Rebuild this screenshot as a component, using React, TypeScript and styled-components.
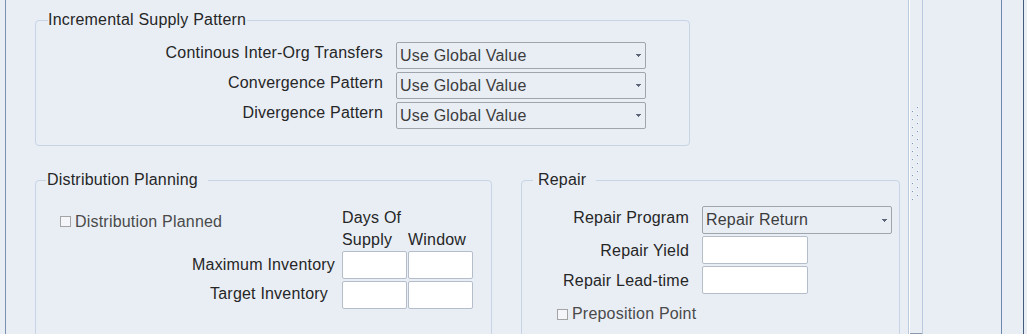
import React from 'react'
import styled, { createGlobalStyle } from 'styled-components'

const GlobalStyle = createGlobalStyle`
  html, body { margin: 0; padding: 0; background: #e9eef5; overflow: hidden; }
  body {
    font-family: "Liberation Sans", Arial, sans-serif;
    font-size: 16px;
    letter-spacing: 0.2px;
    color: #262626;
  }
`

/* ─── Frame ─────────────────────────────────────────── */

const Root = styled.div`
  display: flex;
  height: 334px;
  padding-left: 5px;
  background: #e9eef5;
`

const Main = styled.div`
  width: 903px;
  flex-shrink: 0;
  border-left: 1px solid #7b91b0;
  padding: 11px 0 0 29px;
  box-sizing: border-box;
  display: flex;
  flex-direction: column;
  gap: 25px;
`

const Splitter = styled.div`
  width: 15px;
  flex-shrink: 0;
  box-sizing: border-box;
  border-left: 1px solid #b9c9de;
  border-right: 1px solid #b9c9de;
  box-shadow: inset 1px 0 0 #ffffff;
  display: flex;
  flex-direction: column;
  align-items: flex-start;
`

const Grip = styled.svg`
  margin: 106px 0 0 3px;
  display: block;
`

const SplitterFoot = styled.div`
  margin-top: auto;
  margin-left: 1px;
  height: 1px;
  width: 12px;
  background: #8b98ae;
`

const SidePane = styled.div<{ $w: number; $line: string }>`
  width: ${p => p.$w}px;
  flex-shrink: 0;
  border-right: 1px solid ${p => p.$line};
`

/* ─── Groups ────────────────────────────────────────── */

const Group = styled.fieldset<{ $w: number }>`
  width: ${p => p.$w}px;
  box-sizing: border-box;
  margin: 0;
  padding: 0;
  min-width: 0;
  border: 1px solid #c6d4e6;
  border-radius: 4px;
`

const Legend = styled.legend<{ $ml: number; $pl: number; $pr: number }>`
  margin-left: ${p => p.$ml}px;
  padding: 0 ${p => p.$pr}px 0 ${p => p.$pl}px;
  line-height: 18px;
`

const Row = styled.div`
  display: flex;
  gap: 29px;
`

/* ─── Forms ─────────────────────────────────────────── */

const PatternGrid = styled.div`
  display: grid;
  grid-template-columns: 347px 250px;
  column-gap: 13px;
  row-gap: 3px;
  padding: 13px 43px 16px 0;
`

const DistGrid = styled.div`
  display: grid;
  grid-template-columns: 281px 65px 65px;
  grid-template-rows: 22px 20px 30px 28px;
  column-gap: 1px;
  padding: 20px 18px 40px 24px;
`

const RepairGrid = styled.div`
  display: grid;
  grid-template-columns: 132px 190px;
  grid-auto-rows: 30px;
  column-gap: 13px;
  padding: 17px 7px 40px 35px;
`

const Label = styled.div<{ $dy: number; $pr?: number }>`
  align-self: start;
  text-align: right;
  white-space: nowrap;
  line-height: 18px;
  padding-top: ${p => p.$dy}px;
  padding-right: ${p => p.$pr ?? 0}px;
`

const Head = styled.div<{ $dy: number }>`
  line-height: 18px;
  padding-top: ${p => p.$dy}px;
  white-space: nowrap;
`

const Select = styled.div<{ $h: number }>`
  height: ${p => p.$h}px;
  box-sizing: border-box;
  border: 1px solid #9fa5ad;
  border-radius: 2px;
  display: flex;
  align-items: center;
  justify-content: space-between;
  padding: 0 4px 0 3px;
  color: #3c3c3c;
  line-height: 18px;
  white-space: nowrap;
`

const TextBox = styled.div<{ $w?: number }>`
  height: 28px;
  width: ${p => (p.$w ? `${p.$w}px` : '100%')};
  box-sizing: border-box;
  background: #ffffff;
  border: 1px solid #b4bdc9;
  border-radius: 2px;
`

const Check = styled.div<{ $dy: number; $span?: number }>`
  display: flex;
  align-items: center;
  gap: 4px;
  color: #4a4a4a;
  line-height: 18px;
  white-space: nowrap;
  padding-top: ${p => p.$dy}px;
  grid-column: span ${p => p.$span ?? 1};
`

const Box = styled.span`
  width: 11px;
  height: 11px;
  box-sizing: border-box;
  border: 1px solid #a4a4a4;
  background: #f4f6fa;
  flex-shrink: 0;
`

function Arrow() {
  return (
    <svg width="5" height="3" viewBox="0 0 5 3" shapeRendering="crispEdges">
      <rect x="0" y="0" width="5" height="1" fill="#5f6678" />
      <rect x="1" y="1" width="3" height="1" fill="#5f6678" />
      <rect x="2" y="2" width="1" height="1" fill="#5f6678" />
    </svg>
  )
}

function GripDots() {
  const dots: React.ReactNode[] = []
  for (let i = 0; i < 12; i++) {
    const y = i * 8
    dots.push(
      <g key={i}>
        <rect x="6" y={y} width="1" height="1" fill="#ffffff" />
        <rect x="5" y={y + 1} width="1" height="1" fill="#7f98c0" />
        <rect x="1" y={y + 4} width="1" height="1" fill="#ffffff" />
        <rect x="0" y={y + 5} width="1" height="1" fill="#7f98c0" />
      </g>
    )
  }
  return (
    <Grip width="8" height="96" viewBox="0 0 8 96" shapeRendering="crispEdges">
      {dots}
    </Grip>
  )
}

const patterns = ['Continous Inter-Org Transfers', 'Convergence Pattern', 'Divergence Pattern']

export default function App() {
  return (
    <Root>
      <GlobalStyle />
      <Main>
        <Group $w={655}>
          <Legend $ml={12} $pl={0} $pr={1}>Incremental Supply Pattern</Legend>
          <PatternGrid>
            {patterns.map(p => (
              <React.Fragment key={p}>
                <Label $dy={2}>{p}</Label>
                <Select $h={27}>
                  Use Global Value
                  <Arrow />
                </Select>
              </React.Fragment>
            ))}
          </PatternGrid>
        </Group>

        <Row>
          <Group $w={457}>
            <Legend $ml={10} $pl={1} $pr={10}>Distribution Planning</Legend>
            <DistGrid>
              <Check $dy={3}>
                <Box />
                Distribution Planned
              </Check>
              <Head $dy={0}>Days Of</Head>
              <div />
              <div />
              <Head $dy={0}>Supply</Head>
              <Head $dy={0}>Window</Head>
              <Label $dy={5} $pr={6}>Maximum Inventory</Label>
              <TextBox />
              <TextBox />
              <Label $dy={4} $pr={13}>Target Inventory</Label>
              <TextBox />
              <TextBox />
            </DistGrid>
          </Group>

          <Group $w={379}>
            <Legend $ml={11} $pl={5} $pr={10}>Repair</Legend>
            <RepairGrid>
              <Label $dy={3}>Repair Program</Label>
              <Select $h={28}>
                Repair Return
                <Arrow />
              </Select>
              <Label $dy={6}>Repair Yield</Label>
              <TextBox $w={106} />
              <Label $dy={6}>Repair Lead-time</Label>
              <TextBox $w={106} />
              <Check $dy={6} $span={2}>
                <Box />
                Preposition Point
              </Check>
            </RepairGrid>
          </Group>
        </Row>
      </Main>

      <Splitter>
        <GripDots />
        <SplitterFoot />
      </Splitter>
      <SidePane $w={78} $line="#6a88b0" />
      <SidePane $w={21} $line="#465c7e" />
    </Root>
  )
}
